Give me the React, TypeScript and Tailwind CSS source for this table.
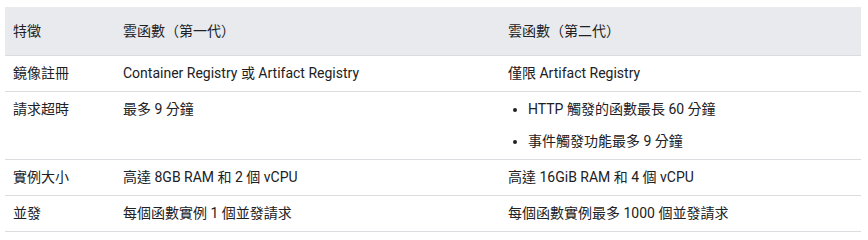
const rows = [
  { feature: '鏡像註冊', gen1: 'Container Registry 或 Artifact Registry', gen2: '僅限 Artifact Registry' },
  { feature: '請求超時', gen1: '最多 9 分鐘', gen2: ['HTTP 觸發的函數最長 60 分鐘', '事件觸發功能最多 9 分鐘'] },
  { feature: '實例大小', gen1: '高達 8GB RAM 和 2 個 vCPU', gen2: '高達 16GiB RAM 和 4 個 vCPU' },
  { feature: '並發', gen1: '每個函數實例 1 個並發請求', gen2: '每個函數實例最多 1000 個並發請求' },
];

export default function App() {
  return (
    <div className="bg-white w-[868px] h-[240px] pt-[7px] pl-[5px] font-['Roboto','Noto_Sans_CJK_TC',sans-serif] text-[14px] leading-[20px] text-[#202124]">
      <table className="w-[856px] border-collapse table-fixed">
        <colgroup>
          <col className="w-[110px]" />
          <col className="w-[385px]" />
          <col className="w-[361px]" />
        </colgroup>
        <thead>
          <tr className="bg-[#e8eaed] border-b border-[#dadce0]">
            <th className="h-[48px] text-left font-normal px-2 align-middle">特徵</th>
            <th className="text-left font-normal px-2 align-middle">雲函數（第一代）</th>
            <th className="text-left font-normal px-2 align-middle">雲函數（第二代）</th>
          </tr>
        </thead>
        <tbody>
          {rows.map((r) => (
            <tr key={r.feature} className="border-b border-[#dadce0]">
              <td className="px-2 h-[36px] align-top pt-[7px] pb-[8px]">{r.feature}</td>
              <td className="px-2 align-top pt-[7px] pb-[8px]">{r.gen1}</td>
              <td className="px-2 align-top pt-[7px] pb-[8px]">
                {Array.isArray(r.gen2) ? (
                  <ul className="list-disc pl-[20px] flex flex-col gap-[12px]">
                    {r.gen2.map((item) => (
                      <li key={item}>{item}</li>
                    ))}
                  </ul>
                ) : (
                  r.gen2
                )}
              </td>
            </tr>
          ))}
        </tbody>
      </table>
    </div>
  );
}
